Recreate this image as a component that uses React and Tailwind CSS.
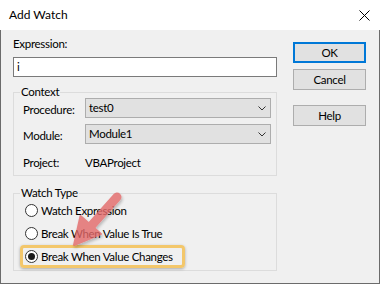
import React from "react";

function Select({ value }) {
  return (
    <div className="flex h-[20px] w-[186px] items-center justify-between border border-[#adadad] bg-[#e1e1e1] pl-[3px] pr-[4px]">
      <span>{value}</span>
      <svg width="8" height="5" viewBox="0 0 8 5">
        <path d="M0.5 0.5 L4 4 L7.5 0.5" fill="none" stroke="#333" strokeWidth="1" />
      </svg>
    </div>
  );
}

function Radio({ checked }) {
  return (
    <span className="flex h-[13px] w-[13px] shrink-0 items-center justify-center rounded-full border border-[#333] bg-white">
      {checked && <span className="h-[7px] w-[7px] rounded-full bg-[#1a1a1a]" />}
    </span>
  );
}

function Btn({ children, focused }) {
  return (
    <div
      className={
        focused
          ? "flex h-[21px] w-[73px] items-center justify-center border-2 border-[#0078d7] bg-[#e1e1e1]"
          : "flex h-[21px] w-[73px] items-center justify-center border border-[#adadad] bg-[#e1e1e1]"
      }
    >
      {children}
    </div>
  );
}

export default function App() {
  return (
    <div className="relative flex h-[284px] w-[380px] flex-col font-['Lato',sans-serif] text-[11.5px] leading-[16px] tracking-[-0.3px] text-black">
      {/* title bar */}
      <div className="flex h-[30px] items-center justify-between bg-white pl-[9px] pr-[10px]">
        <span className="text-[12px] tracking-normal">Add Watch</span>
        <svg width="11" height="11" viewBox="0 0 11 11">
          <path d="M0.5 0.5 L10.5 10.5 M10.5 0.5 L0.5 10.5" stroke="#000" strokeWidth="1" />
        </svg>
      </div>

      {/* body */}
      <div className="flex flex-1 border-x border-b border-[#6b6b6b] bg-[#f0f0f0] pl-[12px] pt-[6px]">
        <div className="flex w-[264px] flex-col">
          <div>Expression:</div>
          <div className="mt-[5px] flex h-[20px] items-center border border-[#7a7a7a] bg-white pl-[3px]">i</div>

          {/* Context group */}
          <div className="mt-[15px] flex flex-col border border-[#dcdcdc] pb-[4px] pl-[9px]">
            <div className="-ml-[3px] -mt-[7px] w-fit bg-[#f0f0f0] px-[1px] leading-[12px]">Context</div>
            <div className="flex items-start">
              <div className="w-[62px] pt-[4px]">Procedure:</div>
              <Select value="test0" />
            </div>
            <div className="mt-[6px] flex items-start">
              <div className="w-[62px] pt-[4px]">Module:</div>
              <Select value="Module1" />
            </div>
            <div className="mt-[11px] flex">
              <div className="w-[62px]">Project:</div>
              <div>VBAProject</div>
            </div>
          </div>

          {/* Watch Type group */}
          <div className="mt-[17px] flex flex-col border border-[#dcdcdc] pb-[2px]">
            <div className="ml-[6px] -mt-[7px] w-fit bg-[#f0f0f0] px-[1px] leading-[12px]">Watch Type</div>
            <div className="flex h-[23px] items-center pl-[11px]">
              <Radio />
              <span className="ml-[3px]">Watch Expression</span>
            </div>
            <div className="flex h-[23px] items-center pl-[11px]">
              <Radio />
              <span className="ml-[3px]">Break When Value Is True</span>
            </div>
            <div className="ml-[6px] flex h-[23px] w-[165px] items-center rounded-[4px] border-[3px] border-[#f3c76b] pl-[2px] shadow-[0_1px_3px_rgba(0,0,0,0.3)]">
              <Radio checked />
              <span className="ml-[3px]">Break When Value Changes</span>
            </div>
          </div>
        </div>

        {/* buttons */}
        <div className="ml-[16px] mt-[6px] flex flex-col">
          <Btn focused>OK</Btn>
          <div className="mt-[6px]">
            <Btn>Cancel</Btn>
          </div>
          <div className="mt-[15px]">
            <Btn>Help</Btn>
          </div>
        </div>
      </div>

      {/* annotation arrow */}
      <svg className="pointer-events-none absolute left-0 top-0" width="380" height="284" viewBox="0 0 380 284">
        <defs>
          <filter id="sh" x="-20%" y="-20%" width="140%" height="140%">
            <feDropShadow dx="1" dy="2" stdDeviation="1.5" floodColor="#000" floodOpacity="0.3" />
          </filter>
        </defs>
        <g filter="url(#sh)" opacity="0.8">
          <path d="M117 197 L92 225" stroke="#e36868" strokeWidth="9" strokeLinecap="round" fill="none" />
          <path d="M74 245 L101 234 L80.5 216 Z" fill="#e36868" stroke="#e36868" strokeWidth="2" strokeLinejoin="round" />
        </g>
      </svg>
    </div>
  );
}
